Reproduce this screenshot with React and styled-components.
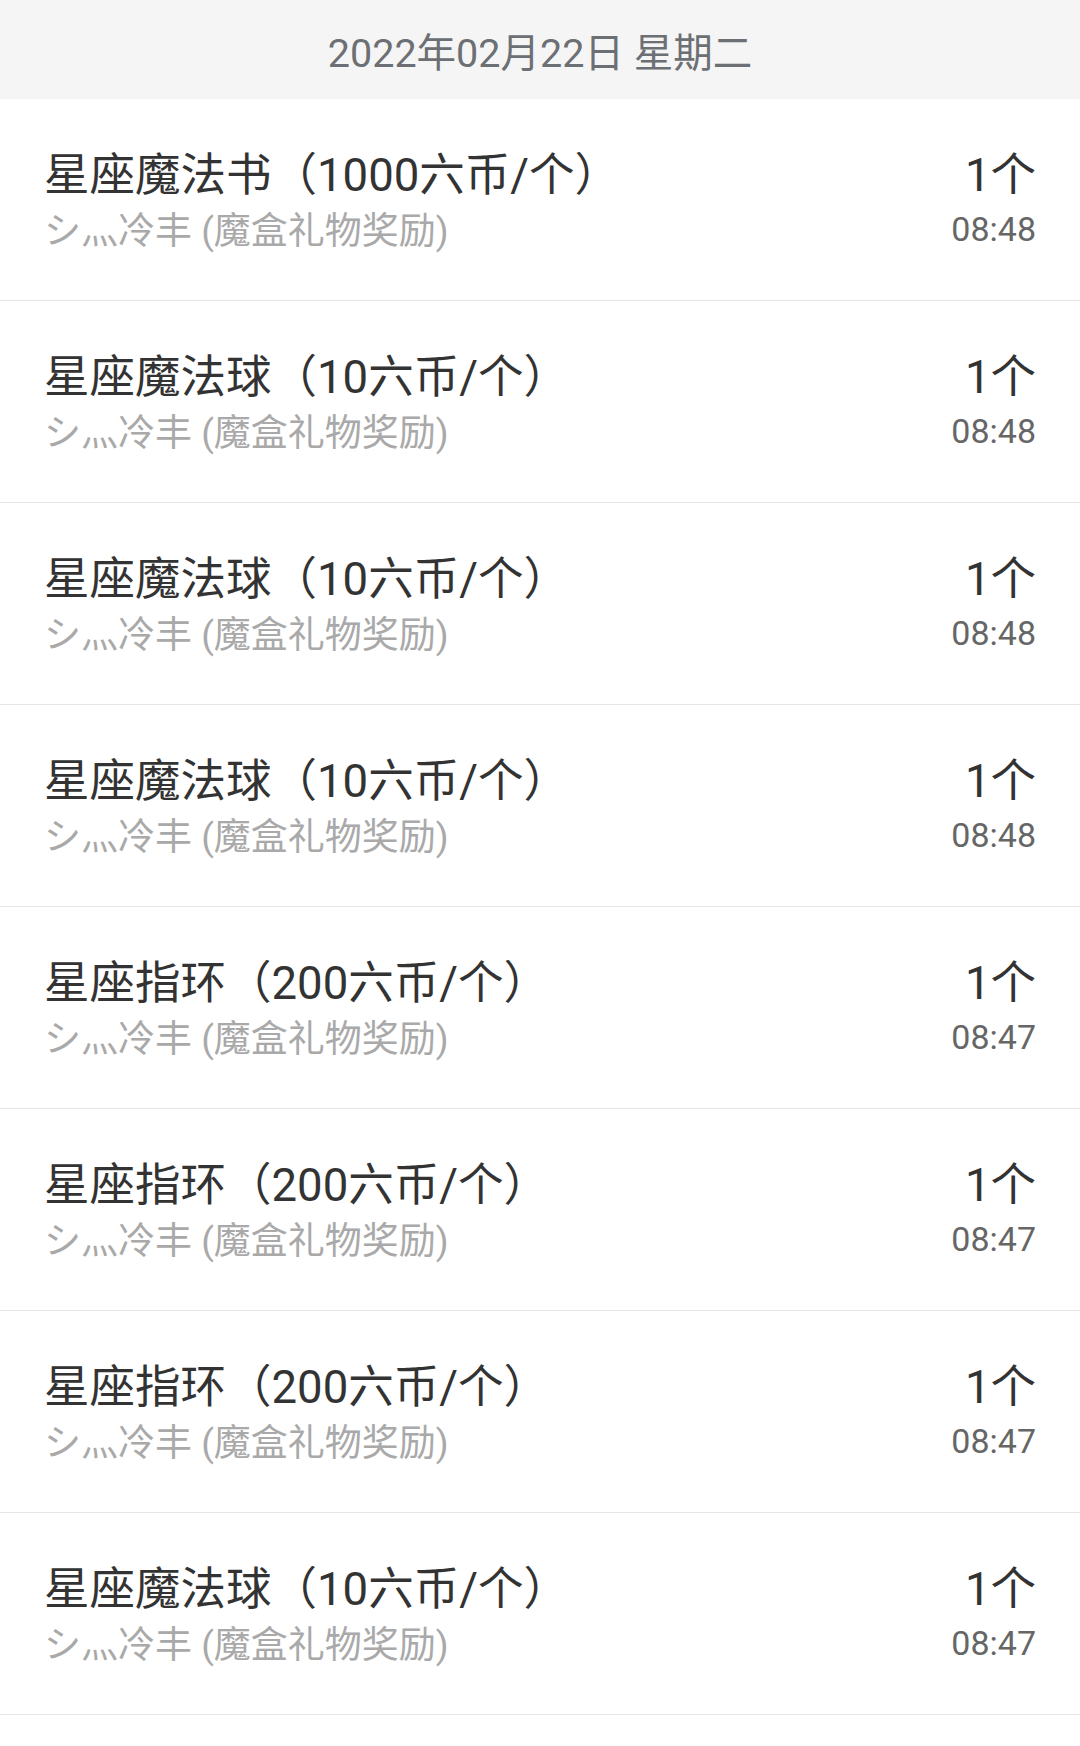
import React from 'react';
import styled, { createGlobalStyle } from 'styled-components';

const GlobalStyle = createGlobalStyle`
    html, body {
        margin: 0;
        padding: 0;
        background: #ffffff;
    }
    body {
        font-family: Roboto, "Noto Sans CJK SC", "Noto Sans", sans-serif;
    }
`;

const records = [
    { name: '星座魔法书（1000六币/个）', count: '1个', time: '08:48' },
    { name: '星座魔法球（10六币/个）', count: '1个', time: '08:48' },
    { name: '星座魔法球（10六币/个）', count: '1个', time: '08:48' },
    { name: '星座魔法球（10六币/个）', count: '1个', time: '08:48' },
    { name: '星座指环（200六币/个）', count: '1个', time: '08:47' },
    { name: '星座指环（200六币/个）', count: '1个', time: '08:47' },
    { name: '星座指环（200六币/个）', count: '1个', time: '08:47' },
    { name: '星座魔法球（10六币/个）', count: '1个', time: '08:47' },
];

const App = () => {
    return (
        <Page>
            <GlobalStyle />
            <DateHeader>2022年02月22日 星期二</DateHeader>
            <List>
                {records.map((r, i) => (
                    <Row key={i}>
                        <Info>
                            <Title>{r.name}</Title>
                            <Sub>シ灬冷丰 (魔盒礼物奖励)</Sub>
                        </Info>
                        <Meta>
                            <Count>{r.count}</Count>
                            <Time>{r.time}</Time>
                        </Meta>
                    </Row>
                ))}
            </List>
        </Page>
    );
};

const Page = styled.div`
    width: 1080px;
    min-height: 1746px;
    background: #ffffff;
`;

const DateHeader = styled.div`
    height: 99px;
    display: flex;
    align-items: center;
    justify-content: center;
    background: #f5f5f5;
    color: #6c6f73;
    font-size: 39.5px;
    padding-bottom: 1px;
    box-sizing: border-box;
`;

const List = styled.ul`
    list-style: none;
    margin: 0;
    padding: 0;
`;

const Row = styled.li`
    height: 202px;
    box-sizing: border-box;
    border-bottom: 1px solid #e6e6e6;
    padding: 48px 44px 0 44px;
    display: flex;
    justify-content: space-between;
    align-items: flex-start;
`;

const Info = styled.div`
    display: flex;
    flex-direction: column;
`;

const Title = styled.div`
    font-size: 45.5px;
    line-height: 57px;
    color: #333333;
`;

const Sub = styled.div`
    font-size: 37px;
    line-height: 55px;
    color: #a9a9a9;
`;

const Meta = styled.div`
    display: flex;
    flex-direction: column;
    align-items: flex-end;
`;

const Count = styled.div`
    font-size: 45.5px;
    line-height: 57px;
    color: #333333;
`;

const Time = styled.div`
    font-size: 34px;
    line-height: 50px;
    color: #666666;
`;

export default App;
